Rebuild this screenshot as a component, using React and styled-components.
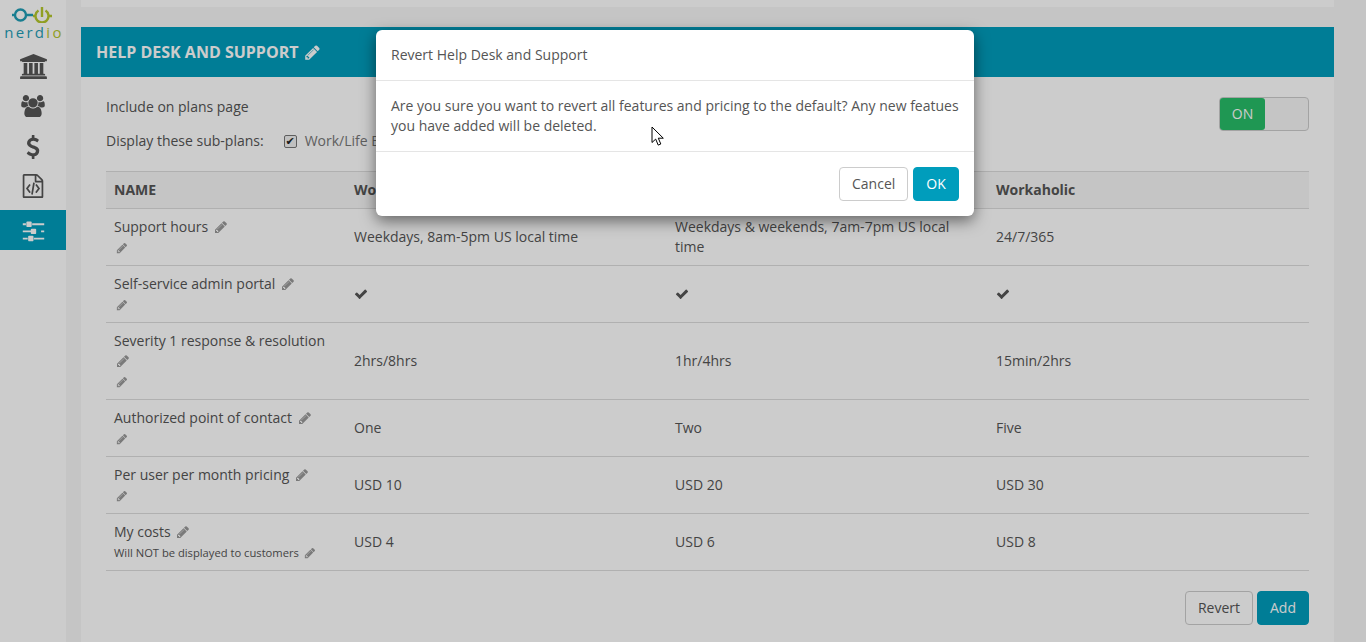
import styled, { createGlobalStyle } from "styled-components";

const rows = [
  { name: "Support hours", values: ["Weekdays, 8am-5pm US local time", "Weekdays & weekends, 7am-7pm US local time", "24/7/365"] },
  { name: "Self-service admin portal", check: true },
  { name: "Severity 1 response & resolution", values: ["2hrs/8hrs", "1hr/4hrs", "15min/2hrs"] },
  { name: "Authorized point of contact", values: ["One", "Two", "Five"] },
  { name: "Per user per month pricing", values: ["USD 10", "USD 20", "USD 30"] },
  { name: "My costs", note: "Will NOT be displayed to customers", values: ["USD 4", "USD 6", "USD 8"] },
];

const Pencil = ({ className }) => (
  <svg className={className} viewBox="0 0 1792 1792" fill="currentColor">
    <path d="M491 1536l91-91-235-235-91 91v107h128v128h107zm523-928q0-22-22-22-10 0-17 7l-542 542q-7 7-7 17 0 22 22 22 10 0 17-7l542-542q7-7 7-17zm-54-192l416 416-832 832h-416v-416zm683 96q0 53-37 90l-166 166-416-416 166-165q36-38 90-38 53 0 91 38l235 234q37 39 37 91z" />
  </svg>
);

// font-awesome 4 shapes, the newer ones in react-icons are drawn differently
const BankIcon = () => (
  <svg width="27" height="25" viewBox="0 0 1920 1792" fill="currentColor">
    <path d="M960 0l960 384v128h-128q0 26-20.500 45t-48.500 19h-1526q-28 0-48.500-19t-20.500-45h-128v-128zm-704 640h256v768h128v-768h256v768h128v-768h256v768h128v-768h256v768h59q28 0 48.500 19t20.500 45v64h-1664v-64q0-26 20.500-45t48.500-19h59v-768zm1595 960q28 0 48.500 19t20.500 45v128h-1920v-128q0-26 20.500-45t48.500-19h1782z" />
  </svg>
);

const UsersIcon = () => (
  <svg width="24" height="22" viewBox="0 0 1920 1792" fill="currentColor">
    <path d="M593 896q-162 5-265 128h-134q-82 0-138-40.500t-56-118.500q0-353 124-353 6 0 43.500 21t97.500 42.500 119 21.500q67 0 133-23-5 37-5 66 0 139 81 256zm1071 637q0 120-73 189.500t-194 69.500h-874q-121 0-194-69.500t-73-189.500q0-53 3.500-103.500t14-109 26.500-108.500 43-97.500 62-81 85.500-53.500 111.500-20q10 0 43 21.500t73 48 107 48 135 21.500 135-21.500 107-48 73-48 43-21.500q61 0 111.500 20t85.500 53.500 62 81 43 97.500 26.500 108.500 14 109 3.500 103.500zm-1024-1277q0 106-75 181t-181 75-181-75-75-181 75-181 181-75 181 75 75 181zm704 384q0 159-112.500 271.500t-271.500 112.500-271.500-112.500-112.500-271.500 112.500-271.500 271.500-112.500 271.500 112.500 112.500 271.500zm576 225q0 78-56 118.500t-138 40.500h-134q-103-123-265-128 81-117 81-256 0-29-5-66 66 23 133 23 59 0 119-21.500t97.500-42.500 43.500-21q124 0 124 353zm-128-609q0 106-75 181t-181 75-181-75-75-181 75-181 181-75 181 75 75 181z" />
  </svg>
);

const DollarIcon = () => (
  <svg width="14" height="24" viewBox="0 0 1024 1792" fill="currentColor">
    <path d="M978 1185q0 153-99.500 263.500t-258.500 136.500v175q0 14-9 23t-23 9h-135q-13 0-22.500-9.500t-9.500-22.500v-175q-66-9-127.500-31t-101.500-44.500-74-48-46.500-37.500-17.500-18q-17-21-2-41l103-135q7-10 23-12 15-2 24 9l2 2q113 99 243 125 37 8 74 8 81 0 142.500-43t61.500-122q0-28-15-53t-33.500-42-58.500-37.500-66-32-80-32.500q-39-16-61.500-25t-61.500-26.500-62.500-31-56.500-35.500-53.500-42.500-43.500-49-35.500-58-21-66.500-8.500-78q0-138 98-242t255-134v-180q0-13 9.500-22.500t22.500-9.500h135q14 0 23 9t9 23v176q57 6 110.500 23t87 33.500 63.500 37.500 39 29 15 14q17 18 5 38l-81 146q-8 15-23 16-14 3-27-7-3-3-14.500-12t-39-26.500-58.500-32-74.500-26-85.500-11.500q-95 0-155 43t-60 111q0 26 8.500 48t29.500 41.500 39.500 33 56 31 60.500 27 70 27.500q53 20 81 31.500t76 35 75.500 42.500 62 50 53 63.500 31.500 76.500 13 94z" />
  </svg>
);

const FileCodeIcon = () => (
  <svg width="24" height="24" viewBox="0 0 1792 1792" fill="currentColor">
    <path d="M1596 380q28 28 48 76t20 88v1152q0 40-28 68t-68 28h-1344q-40 0-68-28t-28-68v-1600q0-40 28-68t68-28h896q40 0 88 20t76 48zm-444-244v376h376q-10-29-22-41l-313-313q-12-12-41-22zm384 1528v-1024h-416q-40 0-68-28t-28-68v-416h-768v1536h1280zm-928-896q8-11 21-12.500t24 6.500l51 38q11 8 12.500 21t-6.500 24l-182 243 182 243q8 11 6.500 24t-12.500 21l-51 38q-11 8-24 6.500t-21-12.500l-226-301q-14-19 0-38zm802 301q14 19 0 38l-226 301q-8 11-21 12.500t-24-6.500l-51-38q-11-8-12.500-21t6.500-24l182-243-182-243q-8-11-6.500-24t12.500-21l51-38q11-8 24-6.500t21 12.500zm-620 461q-13-2-20.500-13t-5.500-24l138-831q2-13 13-20.500t24-5.500l63 10q13 2 20.500 13t5.500 24l-138 831q-2 13-13 20.500t-24 5.500z" />
  </svg>
);

const SlidersIcon = () => (
  <svg width="25" height="25" viewBox="0 0 1792 1792" fill="currentColor">
    <path d="M480 1408v128h-352v-128h352zm352-128q26 0 45 19t19 45v256q0 26-19 45t-45 19h-256q-26 0-45-19t-19-45v-256q0-26 19-45t45-19h256zm160-384v128h-864v-128h864zm-640-512v128h-224v-128h224zm1312 1024v128h-736v-128h736zm-960-1152q26 0 45 19t19 45v256q0 26-19 45t-45 19h-256q-26 0-45-19t-19-45v-256q0-26 19-45t45-19h256zm320 512q26 0 45 19t19 45v256q0 26-19 45t-45 19h-256q-26 0-45-19t-19-45v-256q0-26 19-45t45-19h256zm640 128v128h-224v-128h224zm0-512v128h-864v-128h864z" />
  </svg>
);

const CheckIcon = () => (
  <CheckSvg viewBox="0 0 1792 1792" fill="currentColor">
    <path d="M1671 566q0 40-28 68l-724 724-136 136q-28 28-68 28t-68-28l-136-136-362-362q-28-28-28-68t28-68l136-136q28-28 68-28t68 28l294 295 656-657q28-28 68-28t68 28l136 136q28 28 28 68z" />
  </CheckSvg>
);

const App = () => {
  return (
    <>
      <GlobalStyle />
      <Page>
        <Sidebar>
          <Logo>
            <svg width="66" height="23" viewBox="0 0 66 23" fill="none" strokeWidth="2.4">
              <circle cx="20.500" cy="15" r="5.500" stroke="#1f9db5" />
              <path d="M12 15h3M26 15h7" stroke="#1f9db5" />
              <path d="M38.500 10.500a6.500 6.500 0 1 0 7 0" stroke="#b5c72e" />
              <path d="M42 7v10M33 16h3M48.500 16h3.500" stroke="#b5c72e" />
            </svg>
            <LogoText>nerd<em>io</em></LogoText>
          </Logo>
          <NavItem><BankIcon /></NavItem>
          <NavItem><UsersIcon /></NavItem>
          <NavItem $nudge><DollarIcon /></NavItem>
          <NavItem><FileCodeIcon /></NavItem>
          <NavItem $active><SlidersIcon /></NavItem>
        </Sidebar>

        <Main>
          <TopStrip />
          <Panel>
            <PanelHeader>
              Help Desk and Support <HeaderPencil />
            </PanelHeader>
            <PanelBody>
              <Options>
                <div>
                  <OptionLine>Include on plans page</OptionLine>
                  <OptionLine>
                    Display these sub-plans:
                    <SubPlan>
                      <input type="checkbox" defaultChecked readOnly />
                      Work/Life Balance
                    </SubPlan>
                  </OptionLine>
                </div>
                <Toggle>
                  <ToggleOn>ON</ToggleOn>
                </Toggle>
              </Options>

              <Table>
                <colgroup>
                  <col width="240" />
                  <col width="321" />
                  <col width="321" />
                  <col width="321" />
                </colgroup>
                <thead>
                  <tr>
                    <Th>NAME</Th>
                    <Th>Work/Life Balance</Th>
                    <Th>Workaholic Lite</Th>
                    <Th>Workaholic</Th>
                  </tr>
                </thead>
                <tbody>
                  {rows.map((row) => (
                    <tr key={row.name}>
                      <NameCell>
                        {row.name} <RowPencil />
                        <Note>
                          {row.note} <NotePencil />
                        </Note>
                      </NameCell>
                      {row.check
                        ? [0, 1, 2].map((i) => (
                            <Td key={i}><CheckIcon /></Td>
                          ))
                        : row.values.map((v) => <Td key={v}>{v}</Td>)}
                    </tr>
                  ))}
                </tbody>
              </Table>

              <Actions>
                <Button>Revert</Button>
                <Button $primary>Add</Button>
              </Actions>
            </PanelBody>
          </Panel>
        </Main>

        <Backdrop />
        <Modal>
          <ModalHeader>Revert Help Desk and Support</ModalHeader>
          <ModalBody>
            Are you sure you want to revert all features and pricing to the default? Any new featues you have added will be deleted.
          </ModalBody>
          <ModalFooter>
            <Button $width={69}>Cancel</Button>
            <Button $primary $width={46}>OK</Button>
          </ModalFooter>
        </Modal>

        <Cursor width="14" height="21" viewBox="0 0 14 21">
          <path d="M1 1v15.500l3.700-3.400 2.500 6 2.600-1.100-2.500-5.800h5z" fill="#fff" stroke="#000" strokeWidth="1" />
        </Cursor>
      </Page>
    </>
  );
};

const GlobalStyle = createGlobalStyle`
  html, body {
    margin: 0;
    height: 100%;
    overflow: hidden;
  }
  body {
    font-family: "Open Sans", "Liberation Sans", sans-serif;
    font-size: 14px;
    line-height: 20px;
    color: #555;
    background: #f7f7f7;
  }
`;

const Page = styled.div`
  position: relative;
  display: flex;
  width: 1366px;
  height: 642px;
  overflow: hidden;
`;

const Sidebar = styled.aside`
  width: 66px;
  flex-shrink: 0;
  background: #fff;
`;

const Logo = styled.div`
  height: 46px;
  display: flex;
  flex-direction: column;
  align-items: center;
`;

const LogoText = styled.div`
  font-size: 15px;
  line-height: 14px;
  letter-spacing: 2.300px;
  padding-left: 2px;
  margin-top: 2px;
  color: #1f9db5;
  em {
    font-style: normal;
    color: #b5c72e;
  }
`;

const NavItem = styled.div`
  height: 40px;
  display: flex;
  align-items: center;
  justify-content: center;
  color: ${(p) => (p.$active ? "#fff" : "#555")};
  background: ${(p) => (p.$active ? "#009dbc" : "transparent")};
  margin-top: ${(p) => (p.$active ? "4px" : "0")};
  padding-top: ${(p) => (p.$nudge ? "1px" : "0")};
  box-sizing: border-box;
`;

const Main = styled.main`
  flex: 1;
  padding: 0 32px 0 15px;
`;

const TopStrip = styled.div`
  height: 7px;
  background: #fff;
  margin-bottom: 20px;
`;

const Panel = styled.section`
  background: #fff;
  height: 615px;
`;

const PanelHeader = styled.h2`
  margin: 0;
  height: 50px;
  padding: 0 15px;
  display: flex;
  align-items: center;
  gap: 6px;
  background: #009dbc;
  color: #fff;
  font-size: 16px;
  font-weight: 700;
  text-transform: uppercase;
`;

const HeaderPencil = styled(Pencil)`
  width: 17px;
  height: 17px;
`;

const PanelBody = styled.div`
  padding: 13px 25px 0;
`;

const Options = styled.div`
  display: flex;
  justify-content: space-between;
  align-items: flex-start;
  height: 81px;
`;

const OptionLine = styled.div`
  height: 34px;
  display: flex;
  align-items: center;
`;

const SubPlan = styled.label`
  display: flex;
  align-items: center;
  margin-left: 20px;
  color: #777;
  input {
    appearance: none;
    position: relative;
    width: 13px;
    height: 13px;
    margin: 0 8px 0 0;
    box-sizing: border-box;
    border: 1px solid #767676;
    border-radius: 2px;
    background: #f0f0f0;
  }
  input::after {
    content: "✔";
    position: absolute;
    inset: 0;
    font: 11px/11px "DejaVu Sans", sans-serif;
    text-align: center;
    color: #222;
  }
`;

const Toggle = styled.div`
  width: 88px;
  height: 32px;
  margin-top: 7px;
  border: 1px solid #ccc;
  border-radius: 4px;
  background: #f7f7f7;
`;

const ToggleOn = styled.div`
  width: 45px;
  height: 32px;
  border-radius: 3px;
  background: #27bd68;
  color: #fff;
  display: flex;
  align-items: center;
  justify-content: center;
`;

const Table = styled.table`
  width: 1203px;
  table-layout: fixed;
  border-collapse: collapse;
`;

const Th = styled.th`
  padding: 8px;
  text-align: left;
  font-weight: 700;
  background: #f7f7f7;
  border-top: 1px solid #ddd;
  border-bottom: 1px solid #ddd;
  white-space: nowrap;
`;

const Td = styled.td`
  padding: 8px;
  vertical-align: middle;
  border-bottom: 1px solid #ddd;
`;

const CheckSvg = styled.svg`
  display: block;
  width: 14px;
  height: 14px;
`;

const NameCell = styled(Td)`
  vertical-align: top;
`;

const RowPencil = styled(Pencil)`
  width: 14px;
  height: 14px;
  margin-left: 2px;
  vertical-align: -2px;
  color: #999;
`;

const Note = styled.div`
  font-size: 11.200px;
  height: 20px;
  padding-top: 1px;
  box-sizing: border-box;
`;

const NotePencil = styled(RowPencil)`
  width: 12px;
  height: 12px;
`;

const Actions = styled.div`
  display: flex;
  justify-content: flex-end;
  gap: 4px;
  margin-top: 20px;
`;

const Button = styled.button`
  height: 34px;
  padding: 0 12px;
  box-sizing: border-box;
  width: ${(p) => (p.$width ? `${p.$width}px` : "auto")};
  font: inherit;
  border-radius: 4px;
  border: 1px solid ${(p) => (p.$primary ? "#009dbc" : "#ccc")};
  background: ${(p) => (p.$primary ? "#009dbc" : "#fff")};
  color: ${(p) => (p.$primary ? "#fff" : "#555")};
`;

const Backdrop = styled.div`
  position: absolute;
  inset: 0;
  background: rgba(0, 0, 0, 0.2);
`;

const Modal = styled.div`
  position: absolute;
  left: 376px;
  top: 30px;
  width: 598px;
  background: #fff;
  border-radius: 6px;
  box-shadow: 0 5px 15px rgba(0, 0, 0, 0.5);
`;

const ModalHeader = styled.div`
  padding: 15px;
  border-bottom: 1px solid #e5e5e5;
`;

const ModalBody = styled.div`
  padding: 15px;
`;

const ModalFooter = styled.div`
  display: flex;
  justify-content: flex-end;
  gap: 5px;
  padding: 15px;
  border-top: 1px solid #e5e5e5;
`;

const Cursor = styled.svg`
  position: absolute;
  left: 651px;
  top: 126px;
`;

export default App;
